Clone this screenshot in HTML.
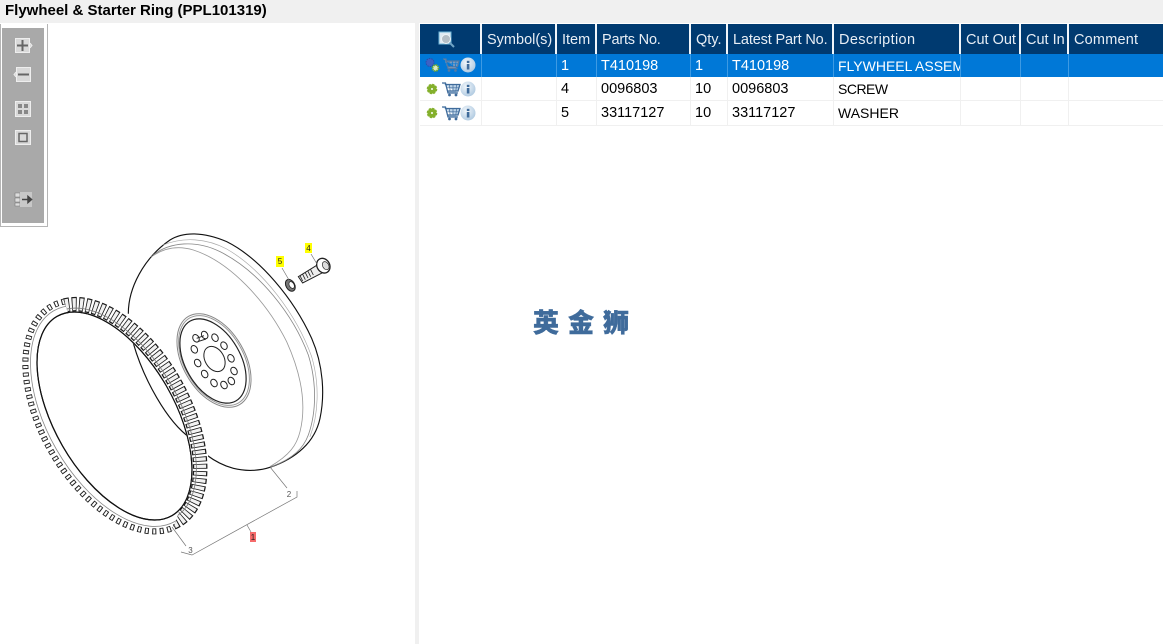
<!DOCTYPE html>
<html><head><meta charset="utf-8"><style>
html,body{margin:0;padding:0;background:#fff}
body{width:1163px;height:644px;overflow:hidden;position:relative;font-family:"Liberation Sans","Noto Sans CJK SC",sans-serif}
#t{position:absolute;left:0;top:0;width:1163px;height:23px;background:#f0f0f0;font-weight:bold;font-size:15px;line-height:22px;text-indent:5px;color:#000}
#s{position:absolute;left:415px;top:23px;width:4px;height:621px;background:#f0f0f0}
.r{position:absolute;left:420px;width:743px;font-size:14.5px;white-space:nowrap}
.c{position:absolute;top:0;bottom:0;box-sizing:border-box;border-right:1px solid #f0f0f0;padding-left:4px;overflow:hidden}
.h{top:24px;height:30px;background:#003a70;color:#e8eef5;line-height:33px}.h .c{border-right:2px solid #f0f5fa;padding-left:5px}
.a{top:54px;height:23px;background:#0078d7;color:#fff;line-height:23px}.a .c{border-right:1px solid #3d9ae3}
.b{height:24px;line-height:23px;color:#000;border-bottom:1px solid #f0f0f0;box-sizing:border-box}
.a .c,.b .c{padding-top:1px}
.a .d,.b .d{font-size:14px;line-height:22px}
#l{position:absolute;left:533px;top:304px;font:900 26px/36px "Noto Sans CJK SC",sans-serif;letter-spacing:9px;color:#3f6b9b;white-space:nowrap;-webkit-text-stroke:.4px #3f6b9b}
svg{position:absolute}
</style></head><body>
<div id="t">Flywheel &amp; Starter Ring (PPL101319)</div>
<div id="s"></div>

<svg style="left:0;top:23px" width="415" height="621" viewBox="0 23 415 621">
<defs>
<clipPath id="cr"><polygon points="58,285 140,300 240,440 240,530 172,532 190,480 150,370 70,318"/></clipPath>
</defs>
<!-- flywheel -->
<g transform="translate(120 225) scale(.33333)" fill="none" stroke-linecap="round">
<path d="M25 265C25 190 70 100 150 45C190 20 250 20 320 50C420 100 520 220 575 340C610 420 615 510 600 580C585 650 530 700 450 727C420 737 380 740 340 730C310 722 280 705 260 690" fill="#fff" stroke="#111" stroke-width="3.400"/>
<path d="M40 355C70 460 140 590 212 640" stroke="#111" stroke-width="3.400"/>
<path d="M95 95C130 70 170 60 220 75C330 110 440 230 500 350C545 450 560 540 540 620C530 660 510 690 450 725" stroke="#999" stroke-width="2.500"/>
<path d="M100 90C150 50 230 45 300 80C420 140 520 270 565 390C590 470 590 560 565 630C550 670 520 700 455 725" stroke="#888" stroke-width="2.500"/>
<path d="M130 60C190 35 260 40 320 72C430 135 530 270 575 395C600 480 595 570 570 635" stroke="#aaa" stroke-width="2"/>
</g>
<!-- hub -->
<g fill="none" stroke="#222" stroke-width="1">
<ellipse cx="214" cy="360.500" rx="51" ry="31" transform="rotate(60 214 360.500)" stroke="#888"/>
<ellipse cx="214" cy="360.500" rx="49" ry="29.500" transform="rotate(60 214 360.500)" stroke="#999"/>
<ellipse cx="213" cy="361" rx="46" ry="27.500" transform="rotate(60 213 361)" stroke-width="1.200"/>
<ellipse cx="214.500" cy="359" rx="13.500" ry="9.500" transform="rotate(60 214.500 359)"/>
<g transform="translate(120 225) scale(.33333)" stroke-width="3">
<ellipse cx="228" cy="340" rx="9" ry="12" transform="rotate(-30 228 340)"/><ellipse cx="254" cy="330" rx="9" ry="12" transform="rotate(-30 254 330)"/><path d="M230 340L252 332M233 350L258 342"/><ellipse cx="285" cy="338" rx="9" ry="12" transform="rotate(-30 285 338)"/><ellipse cx="312" cy="362" rx="9" ry="12" transform="rotate(-30 312 362)"/><ellipse cx="333" cy="400" rx="9" ry="12" transform="rotate(-30 333 400)"/><ellipse cx="342" cy="438" rx="9" ry="12" transform="rotate(-30 342 438)"/><ellipse cx="334" cy="468" rx="9" ry="12" transform="rotate(-30 334 468)"/><ellipse cx="312" cy="480" rx="9" ry="12" transform="rotate(-30 312 480)"/><ellipse cx="282" cy="474" rx="9" ry="12" transform="rotate(-30 282 474)"/><ellipse cx="254" cy="447" rx="9" ry="12" transform="rotate(-30 254 447)"/><ellipse cx="233" cy="414" rx="9" ry="12" transform="rotate(-30 233 414)"/><ellipse cx="223" cy="373" rx="9" ry="12" transform="rotate(-30 223 373)"/>
</g>
</g>
<!-- ring -->
<ellipse cx="115" cy="416" rx="122.500" ry="67.500" transform="rotate(60 115 416)" fill="none" stroke="#fff" stroke-width="17"/>
<ellipse cx="114.500" cy="416" rx="115" ry="60" transform="rotate(60 114.500 416)" fill="none" stroke="#111" stroke-width="1.200"/>
<ellipse cx="114.500" cy="416" rx="121.500" ry="67" transform="rotate(60 114.500 416)" fill="none" stroke="#888" stroke-width=".8"/>
<ellipse cx="114.500" cy="416" rx="126.500" ry="72.500" transform="rotate(60 114.500 416)" fill="none" stroke="#222" stroke-width="6" pathLength="850" stroke-dasharray="5.500 4.500"/>
<ellipse cx="114.500" cy="416" rx="126.500" ry="72.500" transform="rotate(60 114.500 416)" fill="none" stroke="#fff" stroke-width="4.400" pathLength="850" stroke-dasharray="2.800 7.200" stroke-dashoffset="-1.350"/>
<g clip-path="url(#cr)">
<ellipse cx="116" cy="415" rx="122" ry="67" transform="rotate(60 116 415)" fill="none" stroke="#fff" stroke-width="17"/>
<ellipse cx="116" cy="415" rx="122" ry="67" transform="rotate(60 116 415)" fill="none" stroke="#1c1c1c" stroke-width="14.500" pathLength="850" stroke-dasharray="6.800 3.200"/>
<ellipse cx="116" cy="415" rx="122" ry="67" transform="rotate(60 116 415)" fill="none" stroke="#f2f2f2" stroke-width="12" pathLength="850" stroke-dasharray="4.500 5.500" stroke-dashoffset="-1.150"/>
<ellipse cx="116" cy="415" rx="118" ry="63" transform="rotate(60 116 415)" fill="none" stroke="#777" stroke-width=".8"/>
</g>
<ellipse cx="114.500" cy="416" rx="115" ry="60" transform="rotate(60 114.500 416)" fill="none" stroke="#111" stroke-width="1.200"/>
<!-- bolt and washer -->
<g transform="translate(120 225) scale(.33333)" fill="#fff" stroke="#222" stroke-width="3">
<path d="M535 155L595 118L610 142L548 174Z" fill="#eee"/>
<path d="M540 152l8 16M548 148l8 16M556 143l8 16M564 139l8 16M572 134l8 16" stroke-width="2.500"/>
<ellipse cx="610" cy="122" rx="19" ry="23" transform="rotate(-30 610 122)" fill="#fff" stroke-width="4"/>
<ellipse cx="617" cy="122" rx="9" ry="13" transform="rotate(-30 617 122)" fill="#ddd" stroke-width="2"/>
<ellipse cx="511" cy="181" rx="13" ry="19" transform="rotate(-30 511 181)" fill="#777" stroke-width="3"/>
<ellipse cx="515" cy="180" rx="7" ry="11" transform="rotate(-30 515 180)" fill="#fff" stroke-width="2"/>
</g>
<!-- leaders -->
<g fill="none" stroke="#777" stroke-width=".7">
<path d="M282 268L289 280M311 254L317 264M270 467L287 488M172 527L186 546"/>
<path d="M297 491L297 497L192 555L181 552"/>
<path d="M247 525L251 532"/>
</g>
<rect x="276" y="256" width="8" height="11" fill="#ffff00"/>
<rect x="305" y="243" width="7" height="10" fill="#ffff00"/>
<rect x="250" y="532" width="6" height="10" fill="#f56b6b"/>
<g font-family="Liberation Sans" font-size="8" text-anchor="middle" fill="#222">
<text x="280" y="264">5</text><text x="308.500" y="251">4</text><text x="253" y="540">1</text><text x="289" y="497" fill="#555">2</text><text x="190.500" y="553" fill="#555">3</text>
</g>
</svg>

<!-- toolbar -->
<svg style="left:0;top:24px" width="48" height="203" viewBox="0 24 48 203">
<rect x="0" y="24" width="48" height="203" fill="#fff"/>
<path d="M.5 24V226.500H47.500V24" fill="none" stroke="#b5b5b5"/>
<rect x="2" y="28" width="42" height="195" fill="#a9a9a9"/>
<g fill="#d9d9d9" stroke="#eee">
<rect x="15.500" y="38.500" width="14" height="14"/><path d="M30 43l2 2.500-2 2.500"/>
<rect x="16.500" y="67.500" width="14" height="14"/><path d="M16 72l-2 2.500 2 2.500"/>
<rect x="15.500" y="101.500" width="15" height="15"/><rect x="15.500" y="130.500" width="15" height="14"/>
</g>
<path d="M17 45.500H28M22.500 40V51" stroke="#666" stroke-width="2" fill="none"/>
<path d="M18 74.500H29" stroke="#666" stroke-width="2"/>
<path d="M18 104h4v4h-4zM24 104h4v4h-4zM18 110h4v4h-4zM24 110h4v4h-4z" fill="#888"/>
<rect x="19" y="133.500" width="8" height="8" fill="none" stroke="#666" stroke-width="1.500"/>
<path d="M15 193h5v4h-5zM15 198h5v4h-5zM15 203h5v3h-5z" fill="#ddd" stroke="#777" stroke-width=".6"/>
<rect x="20" y="192" width="12" height="15" fill="#c8c8c8"/>
<path d="M22 199.500H30M28 196.500l3.500 3-3.500 3z" stroke="#444" stroke-width="1.500" fill="#444"/>
</svg>

<!-- table -->
<div class="r h">
<div class="c" style="left:0;width:62px"></div><div class="c" style="left:62px;width:75px">Symbol(s)</div><div class="c" style="left:137px;width:40px">Item</div><div class="c" style="left:177px;width:94px;letter-spacing:-.2px">Parts No.</div><div class="c" style="left:271px;width:37px">Qty.</div><div class="c" style="left:308px;width:106px;letter-spacing:-.15px">Latest Part No.</div><div class="c" style="left:414px;width:127px;letter-spacing:.35px">Description</div><div class="c" style="left:541px;width:60px">Cut Out</div><div class="c" style="left:601px;width:48px">Cut In</div><div class="c" style="left:649px;width:94px;border:0;letter-spacing:.2px">Comment</div>
</div>
<div class="r a">
<div class="c" style="left:0;width:62px"></div><div class="c" style="left:62px;width:75px"></div><div class="c" style="left:137px;width:40px">1</div><div class="c" style="left:177px;width:94px">T410198</div><div class="c" style="left:271px;width:37px">1</div><div class="c" style="left:308px;width:106px">T410198</div><div class="c d" style="left:414px;width:127px">FLYWHEEL ASSEMBLY</div><div class="c" style="left:541px;width:60px"></div><div class="c" style="left:601px;width:48px"></div><div class="c" style="left:649px;width:94px;border:0"></div>
</div>
<div class="r b" style="top:77px">
<div class="c" style="left:0;width:62px"></div><div class="c" style="left:62px;width:75px"></div><div class="c" style="left:137px;width:40px">4</div><div class="c" style="left:177px;width:94px">0096803</div><div class="c" style="left:271px;width:37px">10</div><div class="c" style="left:308px;width:106px">0096803</div><div class="c d" style="left:414px;width:127px;letter-spacing:-.5px">SCREW</div><div class="c" style="left:541px;width:60px"></div><div class="c" style="left:601px;width:48px"></div><div class="c" style="left:649px;width:94px;border:0"></div>
</div>
<div class="r b" style="top:101px;height:25px">
<div class="c" style="left:0;width:62px"></div><div class="c" style="left:62px;width:75px"></div><div class="c" style="left:137px;width:40px">5</div><div class="c" style="left:177px;width:94px">33117127</div><div class="c" style="left:271px;width:37px">10</div><div class="c" style="left:308px;width:106px">33117127</div><div class="c d" style="left:414px;width:127px">WASHER</div><div class="c" style="left:541px;width:60px"></div><div class="c" style="left:601px;width:48px"></div><div class="c" style="left:649px;width:94px;border:0"></div>
</div>

<!-- table icons -->
<svg style="left:420px;top:24px" width="62" height="102" viewBox="420 24 62 102">
<defs>
<radialGradient id="ig" cx=".4" cy=".35" r=".75"><stop offset="0" stop-color="#f2f7fb"/><stop offset="1" stop-color="#a9c5de"/></radialGradient>
<g id="info"><circle cx="0" cy="0" r="7.500" fill="url(#ig)"/><rect x="-1.200" y="-1" width="2.600" height="5.500" fill="#3f6b9b"/><rect x="-1.200" y="-4.200" width="2.600" height="2.200" fill="#3f6b9b"/></g>
<g id="gear"><circle r="2.800" fill="none" stroke="#84b02c" stroke-width="3.600"/><circle r="4.400" fill="none" stroke="#84b02c" stroke-width="1.800" stroke-dasharray="2.200 1.250"/></g>
</defs>
<!-- header search -->
<rect x="439" y="32" width="12" height="12" fill="#dfeaf3" stroke="#6fb5d8"/>
<circle cx="446" cy="39" r="4.500" fill="#b5bec6" stroke="#f0f4f7"/>
<path d="M449.500 42.500L454 47" stroke="#6fa3c5" stroke-width="2"/>
<!-- row 1 -->
<circle cx="430" cy="62.500" r="4" fill="#3d62c4" stroke="#2a4aa8" stroke-dasharray="1.500 1"/>
<circle cx="435.500" cy="68" r="3" fill="#dbe8c0" stroke="#6ba52c" stroke-width="1.800" stroke-dasharray="1.500 .8"/>
<path d="M443 59h3l2 9.500h9.500M445 61H459l-1.500 5.500H447" fill="#7d9cbf" stroke="#557aa3" stroke-width="1.200"/>
<path d="M449 61.500l.5 5M452.500 61.500v5M456 61.500l-.5 5M446 63.800h12" stroke="#0078d7" stroke-width=".7"/>
<circle cx="449" cy="70.500" r="1.300" fill="#557aa3"/><circle cx="455.500" cy="70.500" r="1.300" fill="#557aa3"/>
<use href="#info" x="468" y="65"/>
<!-- row 2 -->
<use href="#gear" x="432" y="89"/>
<path d="M442 83h3.500l2.500 10h10M445 84.500H460l-2 6.500H447" fill="#bcd3e8" stroke="#3f6b9b" stroke-width="1.300"/>
<path d="M449.500 85l.6 5.500M453 85v5.500M456.500 85l-.6 5.500M446.500 87.800h12" stroke="#3f6b9b" stroke-width=".7"/>
<circle cx="449.500" cy="95" r="1.400" fill="#3f6b9b"/><circle cx="456" cy="95" r="1.400" fill="#3f6b9b"/>
<use href="#info" x="468" y="89"/>
<!-- row 3 -->
<use href="#gear" x="432" y="113"/>
<path d="M442 107h3.500l2.500 10h10M445 108.500H460l-2 6.500H447" fill="#bcd3e8" stroke="#3f6b9b" stroke-width="1.300"/>
<path d="M449.500 109l.6 5.500M453 109v5.500M456.500 109l-.6 5.500M446.500 111.800h12" stroke="#3f6b9b" stroke-width=".7"/>
<circle cx="449.500" cy="119" r="1.400" fill="#3f6b9b"/><circle cx="456" cy="119" r="1.400" fill="#3f6b9b"/>
<use href="#info" x="468" y="113"/>
</svg>

<div id="l">英金狮</div>
</body></html>
